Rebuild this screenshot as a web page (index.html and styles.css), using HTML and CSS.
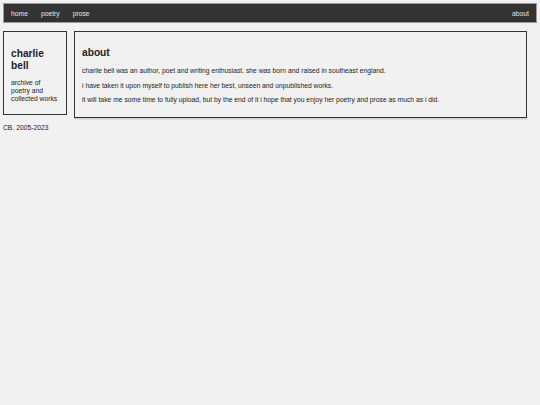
FILE: index.html
```html
<!DOCTYPE html>
<html>
<head>
<meta charset="utf-8">
<link rel="stylesheet" href="styles.css">
</head>
<body>
<nav class="nav">
  <div class="nav-left">
    <a class="nav-link" href="#">home</a>
    <a class="nav-link" href="#">poetry</a>
    <a class="nav-link" href="#">prose</a>
  </div>
  <a class="nav-link" href="#">about</a>
</nav>
<div class="main">
  <aside class="side">
    <h1 class="side-title">charlie bell</h1>
    <p class="side-text">archive of poetry and collected works</p>
  </aside>
  <section class="content">
    <h2 class="content-title">about</h2>
    <p class="content-text">charlie bell was an author, poet and writing enthusiast. she was born and raised in southeast england.</p>
    <p class="content-text">i have taken it upon myself to publish here her best, unseen and unpublished works.</p>
    <p class="content-text">it will take me some time to fully upload, but by the end of it i hope that you enjoy her poetry and prose as much as i did.</p>
  </section>
</div>
<footer class="footer">CB. 2005-2023</footer>
</body>
</html>
```
FILE: styles.css
```css
html, body {
  background: #f1f1f1;
}
body {
  margin: 3px;
  font-family: "Liberation Sans", Arial, sans-serif;
  font-size: 6.75px;
  color: #222;
}
.nav {
  display: flex;
  justify-content: space-between;
  align-items: center;
  height: 18px;
  background: #333;
  border: 1px solid #9a9a9a;
  padding: 0 7px;
}
.nav-left {
  display: flex;
  gap: 13px;
}
.nav-link {
  color: #e6e6e6;
  text-decoration: none;
}
.main {
  display: flex;
  align-items: flex-start;
  margin-top: 8px;
  gap: 7px;
  margin-right: 10px;
}
.side {
  width: 48px;
  height: 70px;
  border: 1.3px solid #333;
  padding: 6px 7px;
  flex: none;
}
.side-title {
  font-size: 10.2px;
  margin: 10px 0 8px;
  line-height: 1.15;
}
.side-text {
  margin: 0;
  line-height: 1.15;
}
.content {
  flex: 1;
  border: 1.3px solid #333;
  padding: 6px 7px 8px;
  box-shadow: 0 1.5px 0 #d0d0d0;
}
.content-title {
  font-size: 10.2px;
  margin: 9px 0 9px;
}
.content-text {
  margin: 0 0 7.5px;
}
.content-text:last-child {
  margin-bottom: 6px;
}
.footer {
  margin-top: 6px;
}
```
